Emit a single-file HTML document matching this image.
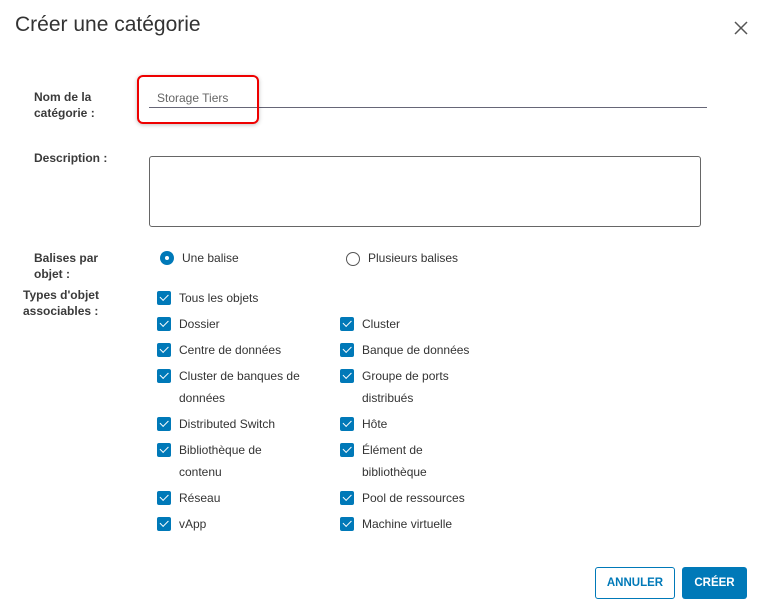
<!DOCTYPE html><html><head><meta charset="utf-8"><style>
body{margin:0;width:762px;height:609px;background:#fff;font-family:"Liberation Sans",sans-serif;color:#333;position:relative;overflow:hidden}
.a{position:absolute}
.t{font-size:12px;line-height:22px}
.lb{font-size:12px;line-height:16px;font-weight:bold;color:#3a3a3a}
.cb{position:absolute;width:14px;height:14px;background:#0079b8;border-radius:2px}
.cb:after{content:"";position:absolute;left:3px;top:3px;width:7px;height:3.5px;border-left:1.5px solid #fff;border-bottom:1.5px solid #fff;transform:rotate(-45deg)}
</style></head><body>
<div class="a" style="left:15px;top:13px;font-size:21px;color:#333">Créer une catégorie</div>
<svg class="a" style="left:734px;top:21px" width="14" height="14" viewBox="0 0 14 14"><path d="M1 1L13 13M13 1L1 13" stroke="#555" stroke-width="1.5"/></svg>
<div class="a lb" style="left:34px;top:89px">Nom de la<br>catégorie :</div>
<div class="a" style="left:149px;top:107px;width:558px;height:1px;background:#667"></div>
<div class="a" style="left:157px;top:91px;font-size:12px;color:#666">Storage Tiers</div>
<div class="a" style="left:137px;top:75px;width:122px;height:49px;border:2px solid #e00;border-radius:6px;box-sizing:border-box;box-shadow:0 1px 4px rgba(0,0,0,.25)"></div>
<div class="a lb" style="left:34px;top:150px">Description :</div>
<div class="a" style="left:149px;top:156px;width:552px;height:71px;border:1px solid #666;border-radius:3px;box-sizing:border-box"></div>
<div class="a lb" style="left:34px;top:250px">Balises par<br>objet :</div>
<div class="a" style="left:160px;top:251px;width:14px;height:14px;border-radius:50%;background:#0079b8"></div>
<div class="a" style="left:165px;top:256px;width:4px;height:4px;border-radius:50%;background:#fff"></div>
<div class="a t" style="left:182px;top:247px">Une balise</div>
<div class="a" style="left:346px;top:252px;width:12px;height:12px;border-radius:50%;border:1px solid #555"></div>
<div class="a t" style="left:368px;top:247px">Plusieurs balises</div>
<div class="a lb" style="left:23px;top:287px">Types d'objet<br>associables :</div>
<div class="cb" style="left:157px;top:291px"></div><div class="a t" style="left:179px;top:287px">Tous les objets</div>
<div class="cb" style="left:157px;top:317px"></div><div class="a t" style="left:179px;top:313px">Dossier</div>
<div class="cb" style="left:157px;top:343px"></div><div class="a t" style="left:179px;top:339px">Centre de données</div>
<div class="cb" style="left:157px;top:369px"></div><div class="a t" style="left:179px;top:365px">Cluster de banques de<br>données</div>
<div class="cb" style="left:157px;top:417px"></div><div class="a t" style="left:179px;top:413px">Distributed Switch</div>
<div class="cb" style="left:157px;top:443px"></div><div class="a t" style="left:179px;top:439px">Bibliothèque de<br>contenu</div>
<div class="cb" style="left:157px;top:491px"></div><div class="a t" style="left:179px;top:487px">Réseau</div>
<div class="cb" style="left:157px;top:517px"></div><div class="a t" style="left:179px;top:513px">vApp</div>
<div class="cb" style="left:340px;top:317px"></div><div class="a t" style="left:362px;top:313px">Cluster</div>
<div class="cb" style="left:340px;top:343px"></div><div class="a t" style="left:362px;top:339px">Banque de données</div>
<div class="cb" style="left:340px;top:369px"></div><div class="a t" style="left:362px;top:365px">Groupe de ports<br>distribués</div>
<div class="cb" style="left:340px;top:417px"></div><div class="a t" style="left:362px;top:413px">Hôte</div>
<div class="cb" style="left:340px;top:443px"></div><div class="a t" style="left:362px;top:439px">Élément de<br>bibliothèque</div>
<div class="cb" style="left:340px;top:491px"></div><div class="a t" style="left:362px;top:487px">Pool de ressources</div>
<div class="cb" style="left:340px;top:517px"></div><div class="a t" style="left:362px;top:513px">Machine virtuelle</div>
<div class="a" style="left:595px;top:567px;width:80px;height:32px;border:1px solid #0079b8;border-radius:3px;box-sizing:border-box;color:#0079b8;font-size:11.5px;font-weight:bold;text-align:center;line-height:30px">ANNULER</div>
<div class="a" style="left:682px;top:567px;width:65px;height:32px;background:#0079b8;border-radius:3px;color:#fff;font-size:11.5px;font-weight:bold;text-align:center;line-height:32px">CRÉER</div>
</body></html>
